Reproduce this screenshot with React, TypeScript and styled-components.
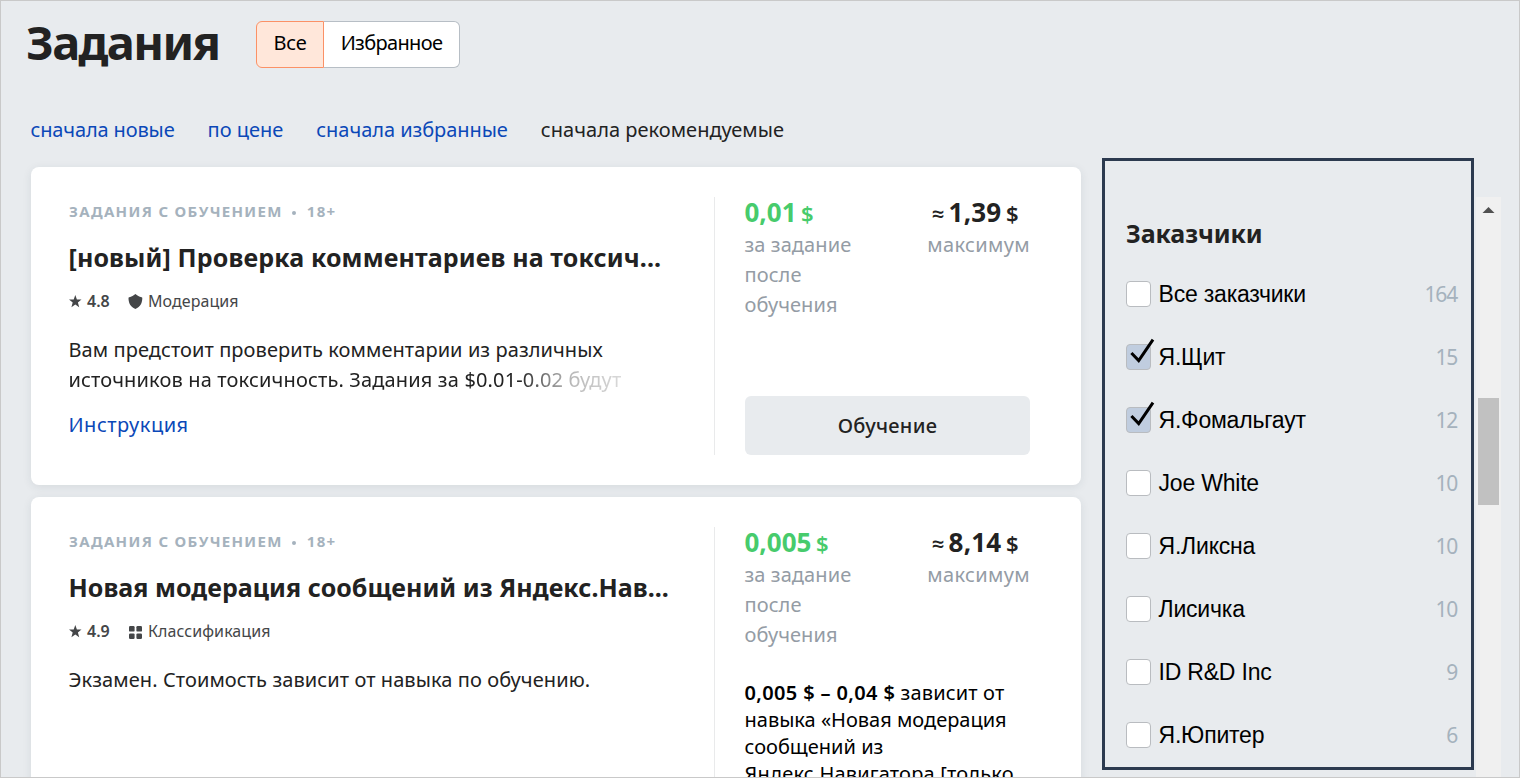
import React from 'react';
import styled, { createGlobalStyle, css } from 'styled-components';

const GlobalStyle = createGlobalStyle`
  *, *::before, *::after { box-sizing: border-box; }
  body {
    margin: 0;
    font-family: "Noto Sans", "Open Sans", sans-serif;
    font-size: 20px;
    color: #222;
  }
`;

const Page = styled.div`
  width: 1520px;
  height: 778px;
  overflow: hidden;
  background: #e8ebee;
  border: 1px solid #c9c9c9;
`;

const Header = styled.header`
  display: flex;
  padding: 20px 0 0 25px;
  height: 67px;
`;

const PageTitle = styled.h1`
  width: 230px;
  margin: 0;
  font-size: 47px;
  line-height: 42px;
  font-weight: 700;
  letter-spacing: -1.65px;
`;

const Switch = styled.div`
  display: flex;
  height: 47px;
`;

const SwitchOption = styled.button<{ $active?: boolean; $width: number; $tracking: number }>`
  width: ${(p) => p.$width}px;
  padding: 0 0 4px;
  font: 400 20px/30px "Noto Sans", sans-serif;
  letter-spacing: ${(p) => p.$tracking}px;
  color: #000;
  ${(p) =>
    p.$active
      ? css`
          background: #ffe7da;
          border: 1px solid #fb9166;
          border-radius: 6px 0 0 6px;
        `
      : css`
          background: #fff;
          border: 1px solid #b7bec5;
          border-left: 0;
          border-radius: 0 6px 6px 0;
        `}
`;

const SortBar = styled.nav`
  display: flex;
  gap: 33px;
  margin: 47px 0 13px 29.5px;
  line-height: 30px;
`;

const SortLink = styled.a<{ $current?: boolean; $tracking?: number }>`
  color: ${(p) => (p.$current ? '#222' : '#0b48b8')};
  letter-spacing: ${(p) => p.$tracking ?? 0}px;
  white-space: nowrap;
`;

const Content = styled.main`
  display: flex;
  align-items: flex-start;
  margin-left: 30px;
`;

const CardList = styled.div`
  display: flex;
  flex-direction: column;
  gap: 12px;
  width: 1050px;
  padding-top: 9px;
  margin-right: 21px;
`;

const Card = styled.article<{ $height: number }>`
  display: flex;
  height: ${(p) => p.$height}px;
  padding: 30px 51px 30px 37px;
  background: #fff;
  border-radius: 8px;
  box-shadow: 0 2px 10px rgba(30, 50, 70, 0.09);
`;

const Info = styled.div`
  width: 646px;
`;

const Eyebrow = styled.div`
  display: flex;
  align-items: center;
  padding-left: 1px;
  font-size: 15px;
  line-height: 28px;
  font-weight: 700;
  letter-spacing: 1.32px;
  color: #a5b2bd;
`;

const Dot = styled.span`
  width: 4px;
  height: 4px;
  margin: 4px 11px 0 9px;
  border-radius: 50%;
  background: currentColor;
`;

const TaskTitle = styled.h2<{ $tracking: number }>`
  margin: 14px 0 0;
  padding-left: 0.5px;
  font-size: 25px;
  line-height: 36px;
  font-weight: 700;
  letter-spacing: ${(p) => p.$tracking}px;
  white-space: nowrap;
`;

const Meta = styled.div`
  display: flex;
  align-items: center;
  margin-top: 15px;
  padding-left: 1px;
  font-size: 16px;
  line-height: 22px;
  color: #444648;
`;

const Rating = styled.span`
  width: 46px;
  padding-left: 5px;
  font-weight: 600;
`;

const Category = styled.span`
  padding-left: 5px;
  letter-spacing: 0.07px;
`;

const Description = styled.p`
  margin: 23px 0 0;
  padding-left: 0.5px;
  line-height: 30px;
`;

const Line = styled.span<{ $tracking: number; $fade?: boolean }>`
  display: block;
  width: 556px;
  white-space: nowrap;
  letter-spacing: ${(p) => p.$tracking}px;
  ${(p) =>
    p.$fade &&
    css`
      mask-image: linear-gradient(90deg, #000 450px, rgba(0, 0, 0, 0.5) 484px, rgba(0, 0, 0, 0.32) 502px, rgba(0, 0, 0, 0.17) 553px);
    `}
`;

const InstructionLink = styled.a`
  display: block;
  margin-top: 15px;
  padding-left: 0.5px;
  line-height: 30px;
  letter-spacing: 0.5px;
  color: #0b48b8;
`;

const Payment = styled.div`
  display: flex;
  flex-direction: column;
  width: 316px;
  padding-left: 29.5px;
  border-left: 1px solid #e9eaeb;
`;

const Prices = styled.div`
  display: flex;
  justify-content: space-between;
`;

const Price = styled.div<{ $max?: boolean }>`
  display: flex;
  align-items: baseline;
  padding-left: ${(p) => (p.$max ? 4.5 : 0)}px;
  font-size: 26px;
  line-height: 30px;
  font-weight: 700;
  letter-spacing: ${(p) => (p.$max ? 0.2 : 0)}px;
  color: ${(p) => (p.$max ? '#222' : '#47cb6c')};
`;

const Sign = styled.span<{ $gap: 'left' | 'right' }>`
  font-size: 22px;
  line-height: 30px;
  font-weight: 600;
  margin-${(p) => p.$gap}: ${(p) => (p.$gap === 'left' ? 4.5 : 4)}px;
`;

const PriceLabel = styled.div<{ $tracking?: number }>`
  max-width: 112px;
  margin-top: 2px;
  line-height: 30px;
  letter-spacing: ${(p) => p.$tracking ?? 0.08}px;
  color: #949ca5;
`;

const TrainButton = styled.button`
  height: 59px;
  margin: auto 0 0 0.5px;
  border: 0;
  border-radius: 6px;
  background: #e8ebee;
  font: 500 20px/30px "Noto Sans", sans-serif;
  letter-spacing: 0.3px;
  color: #222;
`;

const PriceNote = styled.p`
  margin: 29px 0 0;
  line-height: 27px;
  color: #000;

  b { font-weight: 600; letter-spacing: 0.36px; }
`;

const NoteLine = styled.span<{ $tracking?: number }>`
  display: block;
  white-space: nowrap;
  letter-spacing: ${(p) => p.$tracking ?? 0}px;
`;

const Filters = styled.aside`
  width: 372px;
  height: 612px;
  padding: 56px 13px 0 21px;
  border: 3px solid #2c3a4f;
`;

const FiltersTitle = styled.h3`
  margin: 0 0 13px;
  font-size: 25px;
  line-height: 32px;
  font-weight: 700;
  letter-spacing: -0.1px;
`;

const FilterList = styled.div`
  margin-top: 13px;
  height: 504px;
`;

const FilterRow = styled.label`
  display: flex;
  align-items: center;
  height: 63px;
  font-size: 23px;
  font-family: "Liberation Sans", Arial, sans-serif;
  color: #000;
`;

const Checkbox = styled.span<{ $checked?: boolean }>`
  width: 25px;
  height: 26px;
  border: 1px solid #b9bcc0;
  border-radius: 4px;
  background: ${(p) => (p.$checked ? '#c0cddf' : '#fff')};

  svg { display: block; margin: -7px 0 0 -1px; overflow: visible; }
`;

const FilterName = styled.span`
  flex: 1;
  padding: 2px 0 0 7.5px;
  letter-spacing: -0.2px;
`;

const Count = styled.span`
  margin-right: 1px;
  font: 400 21px/30px "Noto Sans", sans-serif;
  letter-spacing: -1.2px;
  color: #a5b2bd;
`;

const ScrollTrack = styled.div`
  display: flex;
  flex-direction: column;
  width: 25px;
  height: 580px;
  margin: 39px 0 0 2px;
  padding: 10px 2px 0;
  background: #f0f0f0;
`;

const ScrollThumb = styled.div`
  height: 107px;
  margin-top: 185px;
  background: #c1c1c1;
`;

const Star = styled.svg`
  margin-top: 1px;
`;

const StarIcon = () => (
  <Star width="13" height="13" viewBox="0 0 13 13">
    <path fill="currentColor" d="M6.3 0 7.9 4.5 12.5 4.6 8.9 7.5 10.2 12.2 6.3 9.5 2.4 12.2 3.7 7.5 0 4.6 4.7 4.5Z" />
  </Star>
);

const ShieldIcon = () => (
  <svg width="15" height="16" viewBox="0 0 15 16">
    <path fill="currentColor" d="M7.4 1C5.7 2.6 3.5 3.8 1.2 4.2 .7 4.300.5 4.600.5 5 .5 9.600 2.200 13.900 7.400 16 12.600 13.900 14.300 9.600 14.300 5 14.300 4.600 14.100 4.300 13.600 4.200 11.300 3.800 9.100 2.600 7.400 1Z" />
  </svg>
);

const GridIcon = () => (
  <svg width="15" height="16" viewBox="0 0 15 16" fill="currentColor">
    <rect x="1" y="3" width="5.6" height="5.6" rx="1.2" />
    <rect x="8.4" y="3" width="5.6" height="5.6" rx="1.2" />
    <rect x="1" y="10.4" width="5.6" height="5.6" rx="1.2" />
    <rect x="8.4" y="10.4" width="5.6" height="5.6" rx="1.2" />
  </svg>
);

const CheckIcon = () => (
  <svg width="30" height="26" viewBox="0 0 30 26">
    <path d="M5.4 15 12.7 22.6 27 1.6" fill="none" stroke="#000" strokeWidth="3" />
  </svg>
);

const ArrowUp = () => (
  <svg width="21" height="6" viewBox="0 0 21 6">
    <path d="M4.5 6 10.5 0 16.5 6Z" fill="#505050" />
  </svg>
);

interface TaskProps {
  title: string;
  tracking: number;
  rating: string;
  icon: React.ReactNode;
  category: string;
  price: string;
  max: string;
  height: number;
  description: React.ReactNode;
  footer: React.ReactNode;
}

const Task = ({ title, tracking, rating, icon, category, price, max, height, description, footer }: TaskProps) => (
  <Card $height={height}>
    <Info>
      <Eyebrow>
        ЗАДАНИЯ С ОБУЧЕНИЕМ
        <Dot />
        18+
      </Eyebrow>
      <TaskTitle $tracking={tracking}>{title}</TaskTitle>
      <Meta>
        <StarIcon />
        <Rating>{rating}</Rating>
        {icon}
        <Category>{category}</Category>
      </Meta>
      {description}
    </Info>
    <Payment>
      <Prices>
        <div>
          <Price>
            {price}
            <Sign $gap="left">$</Sign>
          </Price>
          <PriceLabel>за задание после обучения</PriceLabel>
        </div>
        <div>
          <Price $max>
            <Sign $gap="right">≈</Sign>
            {max}
            <Sign $gap="left">$</Sign>
          </Price>
          <PriceLabel $tracking={0.35}>максимум</PriceLabel>
        </div>
      </Prices>
      {footer}
    </Payment>
  </Card>
);

const customers: { name: string; count: number; checked?: boolean }[] = [
  { name: 'Все заказчики', count: 164 },
  { name: 'Я.Щит', count: 15, checked: true },
  { name: 'Я.Фомальгаут', count: 12, checked: true },
  { name: 'Joe White', count: 10 },
  { name: 'Я.Ликсна', count: 10 },
  { name: 'Лисичка', count: 10 },
  { name: 'ID R&D Inc', count: 9 },
  { name: 'Я.Юпитер', count: 6 },
];

export default function App() {
  return (
    <Page>
      <GlobalStyle />
      <Header>
        <PageTitle>Задания</PageTitle>
        <Switch>
          <SwitchOption $active $width={68} $tracking={-0.3}>Все</SwitchOption>
          <SwitchOption $width={136} $tracking={-0.65}>Избранное</SwitchOption>
        </Switch>
      </Header>
      <SortBar>
        <SortLink $tracking={-0.14}>сначала новые</SortLink>
        <SortLink>по цене</SortLink>
        <SortLink $tracking={-0.05}>сначала избранные</SortLink>
        <SortLink $current $tracking={0.03}>сначала рекомендуемые</SortLink>
      </SortBar>
      <Content>
        <CardList>
          <Task
            title="[новый] Проверка комментариев на токсич..."
            tracking={0.13}
            rating="4.8"
            icon={<ShieldIcon />}
            category="Модерация"
            price="0,01"
            max="1,39"
            height={318}
            description={
              <>
                <Description>
                  <Line $tracking={0.07}>Вам предстоит проверить комментарии из различных</Line>
                  <Line $tracking={0.15} $fade>источников на токсичность. Задания за $0.01-0.02 будут</Line>
                </Description>
                <InstructionLink>Инструкция</InstructionLink>
              </>
            }
            footer={<TrainButton>Обучение</TrainButton>}
          />
          <Task
            title="Новая модерация сообщений из Яндекс.Нав..."
            tracking={0.05}
            rating="4.9"
            icon={<GridIcon />}
            category="Классификация"
            price="0,005"
            max="8,14"
            height={500}
            description={
              <Description>
                <Line $tracking={0.08}>Экзамен. Стоимость зависит от навыка по обучению.</Line>
              </Description>
            }
            footer={
              <PriceNote>
                <NoteLine $tracking={0.15}><b>0,005 $ – 0,04 $</b> зависит от</NoteLine>
                <NoteLine>навыка «Новая модерация</NoteLine>
                <NoteLine>сообщений из</NoteLine>
                <NoteLine $tracking={0.18}>Яндекс.Навигатора [только</NoteLine>
              </PriceNote>
            }
          />
        </CardList>
        <Filters>
          <FiltersTitle>Заказчики</FiltersTitle>
          <FilterList>
            {customers.map((c) => (
              <FilterRow key={c.name}>
                <Checkbox $checked={c.checked}>{c.checked && <CheckIcon />}</Checkbox>
                <FilterName>{c.name}</FilterName>
                <Count>{c.count}</Count>
              </FilterRow>
            ))}
          </FilterList>
        </Filters>
        <ScrollTrack>
          <ArrowUp />
          <ScrollThumb />
        </ScrollTrack>
      </Content>
    </Page>
  );
}
